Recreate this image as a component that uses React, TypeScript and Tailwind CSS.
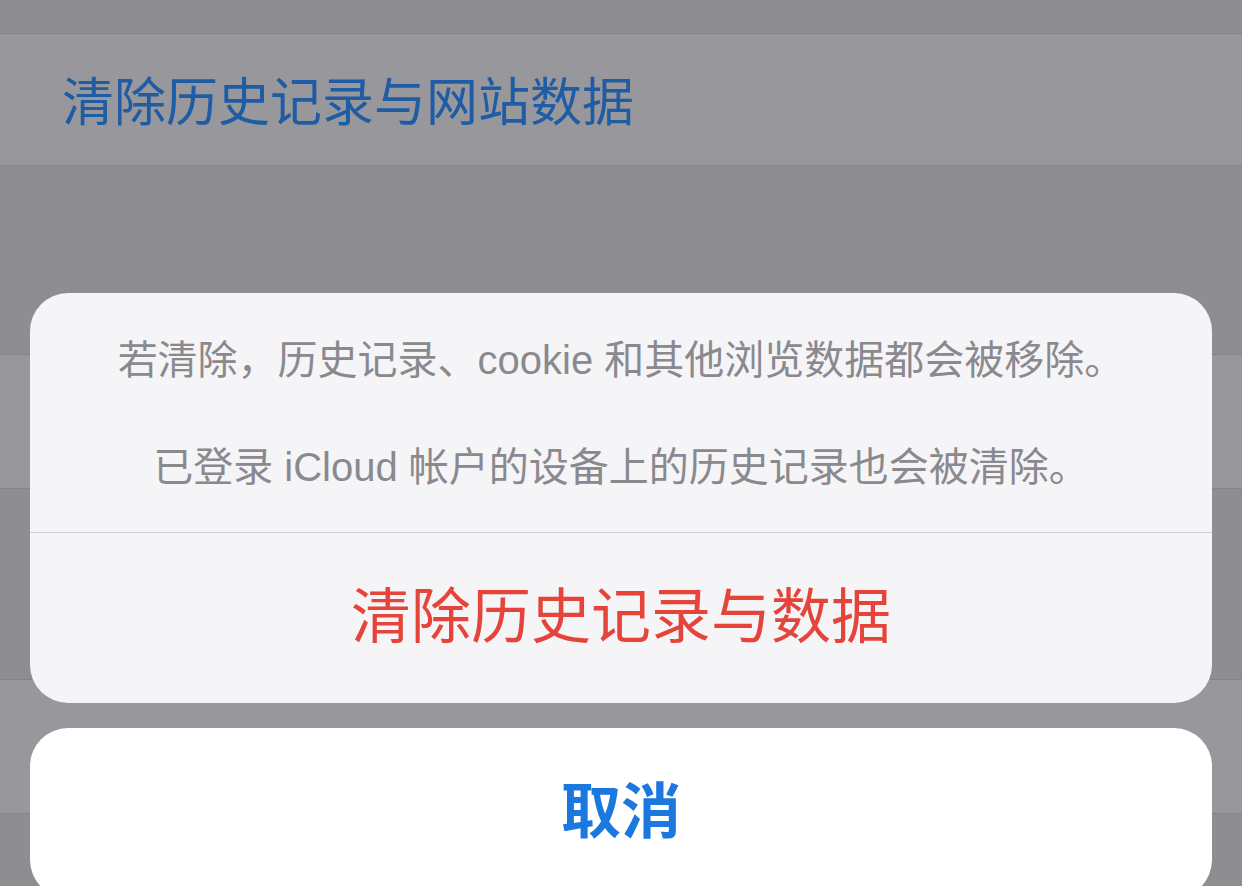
import React from 'react';

const font = { fontFamily: '"Liberation Sans", "Noto Sans CJK SC", sans-serif' };

const BackgroundRow: React.FC<{ children?: React.ReactNode; className?: string }> = ({ children, className }) => (
    <div className={`flex items-center border-b border-[#848387] bg-[#98979b] ${className ?? ''}`}>
        {children}
    </div>
);

export default function App() {
    return (
        <div className="relative h-[886px] w-full overflow-hidden bg-[#8e8d92]" style={font}>
            {/* dimmed settings list behind the sheet */}
            <div className="flex flex-col">
                <div className="h-[34px] border-b border-[#848387]" />
                <BackgroundRow className="h-[132px] pl-[62px] pt-[6px]">
                    <span className="text-[52px] leading-none text-[#1f5ca6]">清除历史记录与网站数据</span>
                </BackgroundRow>
                <div className="h-[189px] border-b border-[#848387]" />
                <BackgroundRow className="h-[134px]" />
                <div className="h-[191px] border-b border-[#848387]" />
                <BackgroundRow className="h-[134px]" />
            </div>

            {/* action sheet */}
            <div className="absolute inset-0 flex flex-col px-[30px] pt-[293px]">
                <div className="shrink-0 overflow-hidden rounded-[38px] bg-[#f5f5f7]">
                    <div className="flex h-[239px] flex-col items-center pt-[42px] text-[40px] leading-[50px] text-[#8a898e]">
                        <p>若清除，历史记录、cookie 和其他浏览数据都会被移除。</p>
                        <p className="mt-[57px]">已登录 iCloud 帐户的设备上的历史记录也会被清除。</p>
                    </div>
                    <div className="border-t border-[#cfced3]" />
                    <button className="flex h-[170px] w-full items-center justify-center text-[60px] leading-none text-[#e5443b]">
                        清除历史记录与数据
                    </button>
                </div>
                <div className="mt-[25px] flex h-[170px] shrink-0 items-center justify-center rounded-[38px] bg-white">
                    <button className="text-[60px] font-bold leading-none text-[#1b78de]">取消</button>
                </div>
            </div>
        </div>
    );
}
